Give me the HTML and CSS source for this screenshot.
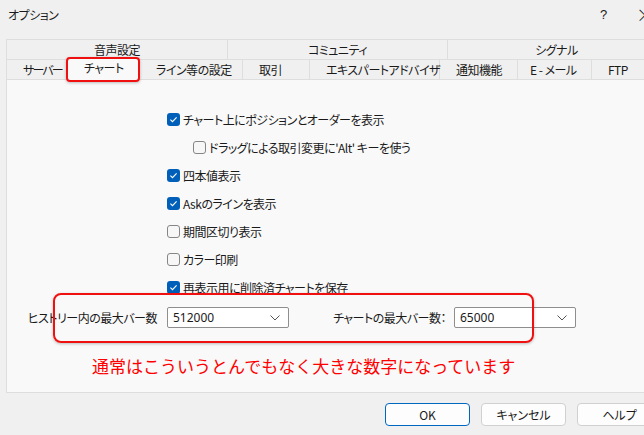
FILE: index.html
```html
<!DOCTYPE html>
<html>
  <head>
    <title>オプション</title>
    <link rel="stylesheet" href="styles.css">
  </head>
  <body>
    <div class="window">
      <div class="titlebar">
        <span class="title">オプション</span>
        <span class="help">?</span>
        <span class="close">&times;</span>
      </div>

      <div class="tabs">
        <div class="tab-row top">
          <div class="tab w-sound">音声設定</div>
          <div class="tab w-community">コミュニティ</div>
          <div class="tab w-signal">シグナル</div>
        </div>
        <div class="tab-row bottom">
          <div class="tab w-server">サーバー</div>
          <div class="tab w-chart selected">チャート<span class="mark-tab"></span></div>
          <div class="tab w-line">ライン等の設定</div>
          <div class="tab w-trade">取引</div>
          <div class="tab w-expert">エキスパートアドバイザ</div>
          <div class="tab w-notify">通知機能</div>
          <div class="tab w-mail">E - メール</div>
          <div class="tab w-ftp">FTP</div>
        </div>
      </div>

      <div class="panel">
        <div class="checks">
          <div class="check on"><span class="box"><svg width="13" height="13" viewBox="0 0 13 13"><rect width="13" height="13" rx="3" fill="#005fb8"/><path d="M3.4 6.7 L5.5 8.7 L9.6 4.4" fill="none" stroke="#fff" stroke-width="1.1"/></svg></span>チャート上にポジションとオーダーを表示</div>
          <div class="check sub"><span class="box empty"></span>ドラッグによる取引変更に'Alt' キーを使う</div>
          <div class="check on"><span class="box"><svg width="13" height="13" viewBox="0 0 13 13"><rect width="13" height="13" rx="3" fill="#005fb8"/><path d="M3.4 6.7 L5.5 8.7 L9.6 4.4" fill="none" stroke="#fff" stroke-width="1.1"/></svg></span>四本値表示</div>
          <div class="check on"><span class="box"><svg width="13" height="13" viewBox="0 0 13 13"><rect width="13" height="13" rx="3" fill="#005fb8"/><path d="M3.4 6.7 L5.5 8.7 L9.6 4.4" fill="none" stroke="#fff" stroke-width="1.1"/></svg></span>Askのラインを表示</div>
          <div class="check"><span class="box empty"></span>期間区切り表示</div>
          <div class="check"><span class="box empty"></span>カラー印刷</div>
          <div class="check on"><span class="box"><svg width="13" height="13" viewBox="0 0 13 13"><rect width="13" height="13" rx="3" fill="#005fb8"/><path d="M3.4 6.7 L5.5 8.7 L9.6 4.4" fill="none" stroke="#fff" stroke-width="1.1"/></svg></span>再表示用に削除済チャートを保存</div>
        </div>

        <div class="combos">
          <label class="combo-label first">ヒストリー内の最大バー数</label>
          <div class="select">512000<svg class="chev" width="10" height="6" viewBox="0 0 10 6"><path d="M0.5 0.5 L5 5 L9.5 0.5" fill="none" stroke="#555" stroke-width="1"/></svg></div>
          <label class="combo-label second">チャートの最大バー数：</label>
          <div class="select">65000<svg class="chev" width="10" height="6" viewBox="0 0 10 6"><path d="M0.5 0.5 L5 5 L9.5 0.5" fill="none" stroke="#555" stroke-width="1"/></svg></div>
        </div>

        <p class="note">通常はこういうとんでもなく大きな数字になっています</p>

        <span class="mark-combo"></span>
      </div>

      <div class="footer">
        <button class="btn default">OK</button>
        <button class="btn">キャンセル</button>
        <button class="btn">ヘルプ</button>
      </div>
    </div>
  </body>
</html>
```

FILE: styles.css
```css
body {
  margin: 0;
  background-color: #f0f0f0;
  font-family: "Noto Sans CJK JP", "Noto Sans", sans-serif;
  font-feature-settings: "palt";
  font-size: 12px;
  letter-spacing: -0.5px;
  color: #1a1a1a;
  overflow: hidden;
}

.window {
  width: 644px;
  height: 435px;
  overflow: hidden;
}

.titlebar {
  height: 28px;
  display: flex;
  align-items: center;
  padding-left: 8px;
}

.title {
  flex: 1;
}

.help {
  width: 36px;
  font-family: "Liberation Sans", sans-serif;
  font-size: 13px;
}

.close {
  width: 8px;
  font-size: 18px;
  font-weight: 300;
  overflow: hidden;
}

.tabs {
  margin: 11px 0 0 6px;
  width: 660px;
}

.tab-row {
  display: flex;
  height: 20px;
}

.tab {
  box-sizing: border-box;
  height: 20px;
  line-height: 20px;
  border: 1px solid #dedede;
  border-left: none;
  white-space: nowrap;
  position: relative;
}

.tab-row .tab:first-child {
  border-left: 1px solid #dedede;
}

.tab-row.top .tab {
  text-align: center;
  border-bottom: none;
}

.tab-row.bottom .tab {
  padding-left: 16px;
  border-bottom: none;
}

.w-sound { width: 222px; }
.w-community { width: 220px; }
.w-signal { width: 218px; }

.w-server { width: 62px; letter-spacing: -1.8px; }
.w-chart { width: 72px; }
.w-line { width: 103px; }
.w-trade { width: 67px; }
.w-expert { width: 130px; }
.w-notify { width: 78px; }
.w-mail { width: 74px; padding-left: 12px !important; }
.w-ftp { width: 68px; }

.tab.selected {
  background-color: #f9f9f9;
  height: 23px;
  margin-top: -2px;
  line-height: 20px;
  padding-left: 20px;
  z-index: 2;
  border-left: 1px solid #dedede;
  margin-left: -1px;
  width: 73px;
}

.mark-tab {
  position: absolute;
  left: -2px;
  top: -1px;
  width: 70px;
  height: 21px;
  border: 2px solid #f01010;
  border-radius: 4px;
  box-shadow: 0 1px 3px rgba(0, 0, 0, 0.25);
}

.panel {
  position: relative;
  box-sizing: border-box;
  margin-left: 6px;
  width: 660px;
  height: 314px;
  background-color: #f9f9f9;
  border: 1px solid #dedede;
}

.checks {
  padding: 25px 0 0 160px;
}

.check {
  height: 28px;
  display: flex;
  align-items: center;
}

.check.sub {
  padding-left: 26px;
}

.box {
  width: 13px;
  height: 13px;
  margin-right: 3px;
  display: flex;
}

.box.empty {
  box-sizing: border-box;
  border: 1px solid #868686;
  border-radius: 3px;
  background-color: #f7f7f7;
}

.combos {
  display: flex;
  align-items: center;
  margin-top: 6px;
}

.combo-label {
  text-align: right;
  white-space: nowrap;
}

.combo-label.first {
  width: 150px;
  margin-right: 10px;
}

.combo-label.second {
  width: 157px;
  margin-right: 8px;
}

.select {
  box-sizing: border-box;
  width: 122px;
  height: 21px;
  line-height: 19px;
  padding-left: 5px;
  background-color: #fff;
  border: 1px solid #8e8e8e;
  border-radius: 2px;
  font-family: "Noto Sans", sans-serif;
  font-size: 12px;
  letter-spacing: 0;
  position: relative;
}

.chev {
  position: absolute;
  right: 8px;
  top: 7px;
}

.note {
  margin: 27px 0 0 85px;
  font-size: 17px;
  font-feature-settings: normal;
  letter-spacing: 0;
  color: #f00;
  line-height: 22px;
}

.mark-combo {
  position: absolute;
  left: 46px;
  top: 213px;
  width: 477px;
  height: 46px;
  border: 2px solid #f01010;
  border-radius: 8px;
  box-shadow: 0 1px 3px rgba(0, 0, 0, 0.25);
}

.footer {
  display: flex;
  gap: 11px;
  padding: 10px 0 0 385px;
}

.btn {
  box-sizing: border-box;
  width: 85px;
  height: 23px;
  flex-shrink: 0;
  background-color: #fdfdfd;
  border: 1px solid #d0d0d0;
  border-radius: 4px;
  font-family: "Noto Sans CJK JP", sans-serif;
  font-feature-settings: "palt";
  font-size: 12px;
  color: #1a1a1a;
  padding: 0;
}

.btn.default {
  border: 1px solid #0067c0;
}
```
